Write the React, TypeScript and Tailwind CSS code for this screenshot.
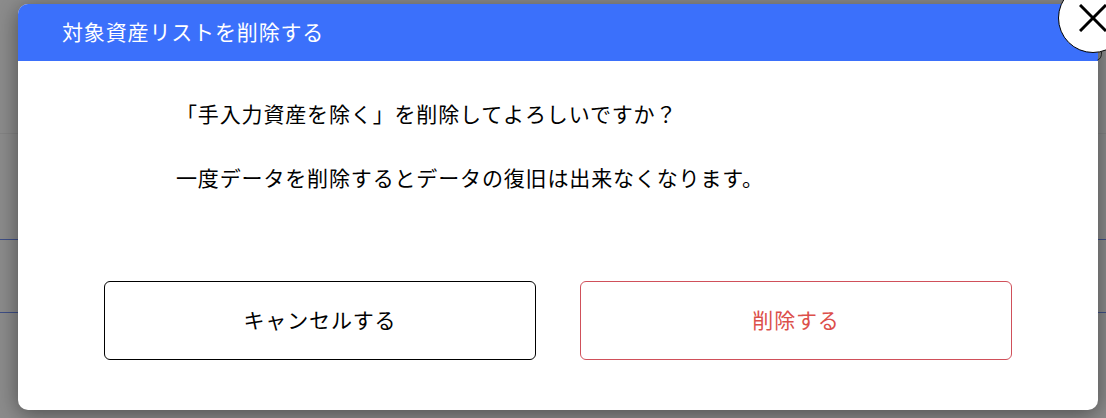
const App = () => {
  return (
    <div className="relative h-[418px] w-[1106px] overflow-hidden bg-[#8c8c8c] font-['Noto_Sans_CJK_JP',sans-serif]">
      {/* page behind the overlay */}
      <div className="h-[134px] border-b border-[#848484]" />
      <div className="h-[106px] border-b border-[#3f4f86]" />
      <div className="h-[73px] border-b border-[#3f4f86]" />

      <div className="absolute inset-0 pl-[18px] pt-1">
        <div className="relative flex h-[406px] w-[1080px] flex-col rounded-[10px] bg-white shadow-[0_4px_22px_rgba(0,0,0,0.45)]">
          <div className="flex h-[57px] shrink-0 items-center rounded-t-[10px] bg-[#3b70fb] pb-0.5 pl-11 text-[21px] tracking-[0.85px] text-white">
            対象資産リストを削除する
          </div>

          {/* little hook left under the close button */}
          <svg viewBox="0 0 6 9" className="absolute left-[1079px] top-[48px] h-[9px] w-[6px]" fill="none" stroke="#222" strokeWidth="1">
            <path d="M4.5 0 C4.8 4 3.5 7 0.5 8" />
          </svg>

          <button className="absolute left-[1040px] top-[-21px] flex h-[70px] w-[70px] items-center justify-center rounded-full border border-black bg-white">
            <svg viewBox="0 0 28 28" className="h-7 w-7" fill="none" stroke="#000" strokeWidth="3">
              <line x1="1" y1="1" x2="27" y2="27" />
              <line x1="27" y1="1" x2="1" y2="27" />
            </svg>
          </button>

          <div className="flex flex-col gap-[35px] pl-[158px] pt-[38px] text-[21px] leading-[29px] tracking-[0.85px] text-black">
            <p>「手入力資産を除く」を削除してよろしいですか？</p>
            <p>一度データを削除するとデータの復旧は出来なくなります。</p>
          </div>

          <div className="mt-[89px] flex gap-11 pl-[86px]">
            <button className="flex h-[79px] w-[432px] items-center justify-center rounded-md border border-black pb-0.5 text-[21px] tracking-[0.85px] text-black">
              キャンセルする
            </button>
            <button className="flex h-[79px] w-[432px] items-center justify-center rounded-md border border-[#d0505a] pb-0.5 text-[21px] tracking-[0.85px] text-[#dc4f4a]">
              削除する
            </button>
          </div>
        </div>
      </div>
    </div>
  );
};

export default App;
